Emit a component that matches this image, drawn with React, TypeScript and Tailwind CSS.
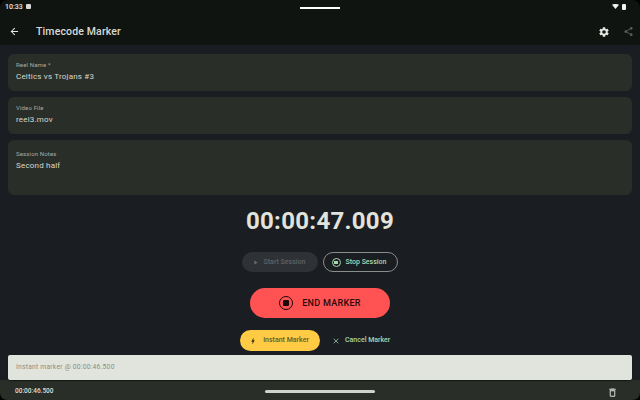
import { ArrowLeft, X } from 'lucide-react';

const font = "font-['Roboto',sans-serif]";

function Field({ label, value, height, top }: { label: string; value: string; height: string; top: string }) {
  return (
    <div className={`${height} ${top} rounded-[6px] bg-[#2a2e28] px-[8px]`}>
      <p className="text-[6px] leading-[8px] tracking-[0.15px] text-[#a8aca4]">{label}</p>
      <p className="mt-[2px] text-[8px] leading-[12px] tracking-[0.2px] text-[#d6d8d0]">{value}</p>
    </div>
  );
}

function Corner({ className, d }: { className: string; d: string }) {
  return (
    <svg viewBox="0 0 8 8" className={`absolute h-[8px] w-[8px] ${className}`}>
      <path d={d} fill="#000" />
    </svg>
  );
}

function MaterialIcon({ d, className }: { d: string; className: string }) {
  return (
    <svg viewBox="0 0 24 24" className={className} fill="currentColor">
      <path d={d} />
    </svg>
  );
}

const gear =
  'M19.14 12.94c.04-.3.06-.61.06-.94 0-.32-.02-.64-.07-.94l2.03-1.58a.49.49 0 0 0 .12-.61l-1.92-3.32a.49.49 0 0 0-.59-.22l-2.39.96c-.5-.38-1.03-.7-1.62-.94l-.36-2.54a.48.48 0 0 0-.48-.41h-3.84a.48.48 0 0 0-.47.41l-.36 2.54c-.59.24-1.13.57-1.62.94l-2.39-.96a.49.49 0 0 0-.59.22L2.74 8.87a.48.48 0 0 0 .12.61l2.03 1.58c-.05.3-.09.63-.09.94s.02.64.07.94l-2.03 1.58a.49.49 0 0 0-.12.61l1.92 3.32c.12.22.37.29.59.22l2.39-.96c.5.38 1.03.7 1.62.94l.36 2.54c.05.24.24.41.48.41h3.84c.24 0 .44-.17.47-.41l.36-2.54c.59-.24 1.13-.56 1.62-.94l2.39.96c.22.08.47 0 .59-.22l1.92-3.32a.48.48 0 0 0-.12-.61l-2.01-1.58zM12 15.6A3.6 3.6 0 1 1 12 8.4a3.6 3.6 0 0 1 0 7.2z';
const share =
  'M18 16.08c-.76 0-1.44.3-1.96.77L8.91 12.7c.05-.23.09-.46.09-.7s-.04-.47-.09-.7l7.05-4.11c.54.5 1.25.81 2.04.81 1.66 0 3-1.34 3-3s-1.34-3-3-3-3 1.34-3 3c0 .24.04.47.09.7L8.04 9.81C7.5 9.31 6.79 9 6 9c-1.66 0-3 1.34-3 3s1.34 3 3 3c.79 0 1.5-.31 2.04-.81l7.12 4.16c-.05.21-.08.43-.08.65 0 1.61 1.31 2.92 2.92 2.92s2.92-1.31 2.92-2.92-1.31-2.92-2.92-2.92z';
const trash = 'M6 19c0 1.1.9 2 2 2h8c1.1 0 2-.9 2-2V7H6v12zM8 9h8v10H8V9zm7.5-5l-1-1h-5l-1 1H5v2h14V4h-3.5z';
const bolt = 'M11 21h-1l1-7H7.5c-.58 0-.57-.32-.38-.66.19-.34.05-.08.07-.12C8.48 10.94 10.42 7.54 13 3h1l-1 7h3.5c.49 0 .56.33.47.51l-.07.15C12.96 17.55 11 21 11 21z';
const play = 'M8 5v14l11-7z';

export default function App() {
  return (
    <div className={`relative flex h-[400px] w-[640px] flex-col overflow-hidden bg-[#1a1e22] ${font}`}>
      {/* status + app bar */}
      <div className="h-[45px] shrink-0 bg-[#101411]">
        <div className="relative flex h-[12px] items-center justify-between pl-[5px] pr-[14px] pt-[1px]">
          <div className="flex items-center gap-[3px]">
            <span className="text-[7px] font-medium leading-[8px] text-[#e8e8e8]">10:33</span>
            <span className="h-[5px] w-[5px] rounded-[1px] bg-[#d8d8d8]" />
          </div>
          <div className="flex items-center gap-[3px]">
            <svg viewBox="0 0 7 5" className="h-[5px] w-[7px]">
              <path d="M0 0.8C2 -0.3 5 -0.3 7 0.8L3.5 5z" fill="#f2f2f2" />
            </svg>
            <span className="h-[6px] w-[4px] rounded-[1px] bg-[#f2f2f2]" />
          </div>
          <span className="absolute left-[300px] top-[7px] h-[2px] w-[40px] bg-white" />
        </div>
        <div className="flex h-[39px] items-center pl-[9px] pr-[6px]">
          <ArrowLeft className="h-[11px] w-[11px] text-[#e4e6e0]" strokeWidth={2.2} />
          <h1 className="ml-[16px] text-[10.5px] font-medium tracking-[0.15px] text-[#d8dad4]">Timecode Marker</h1>
          <MaterialIcon d={gear} className="ml-auto h-[12px] w-[12px] text-[#e4e6e0]" />
          <MaterialIcon d={share} className="ml-[13px] h-[11px] w-[11px] text-[#5a5e58]" />
        </div>
      </div>

      {/* form */}
      <div className="flex flex-col gap-[6px] px-[8px] pt-[9px]">
        <Field label="Reel Name *" value="Celtics vs Trojans #3" height="h-[37px]" top="pt-[7px]" />
        <Field label="Video File" value="reel3.mov" height="h-[37px]" top="pt-[7px]" />
        <Field label="Session Notes" value="Second half" height="h-[55px]" top="pt-[10px]" />
      </div>

      {/* timer */}
      <p className="mt-[11px] text-center text-[24px] font-bold leading-[30px] tracking-[0.3px] text-[#e2e4dc]">
        00:00:47.009
      </p>

      {/* session buttons */}
      <div className="mt-[16px] flex justify-center gap-[5px]">
        <button className="flex h-[20px] w-[76px] items-center justify-center gap-[5px] rounded-full bg-[#2e3236] pr-[3px] pt-[1px] text-[7px] font-medium text-[#5e6264]">
          <MaterialIcon d={play} className="h-[7px] w-[7px] text-[#6a6e70]" />
          Start Session
        </button>
        <button className="flex h-[20px] w-[75px] items-center justify-center gap-[5px] rounded-full border border-[#8a8e88] pr-[3px] pt-[1px] text-[7px] font-medium text-[#a8d8b0]">
          <span className="flex h-[9px] w-[9px] items-center justify-center rounded-full border border-[#a8d8b0]">
            <span className="h-[3px] w-[4px] bg-[#a8d8b0]" />
          </span>
          Stop Session
        </button>
      </div>

      {/* end marker */}
      <div className="mt-[16px] flex justify-center">
        <button className="flex h-[30px] w-[140px] items-center justify-center gap-[9px] rounded-full bg-[#ff5252] text-[9px] font-medium tracking-[0.3px] text-[#2a0a0a]">
          <span className="flex h-[14px] w-[14px] items-center justify-center rounded-full border-[1.5px] border-[#1c0808]">
            <span className="h-[6px] w-[6px] rounded-[1px] bg-[#1c0808]" />
          </span>
          <span className="pt-[1px]">END MARKER</span>
        </button>
      </div>

      {/* marker actions */}
      <div className="mt-[12px] flex items-center pl-[240px]">
        <button className="flex h-[21px] w-[80px] items-center justify-center gap-[6px] rounded-full bg-[#ffcb45] pr-[2px] text-[7px] font-medium text-[#6a5a28]">
          <MaterialIcon d={bolt} className="h-[8px] w-[8px] text-[#3a3010]" />
          Instant Marker
        </button>
        <X className="ml-[12px] h-[8px] w-[8px] text-[#a8d8b0]" strokeWidth={2.2} />
        <span className="ml-[5px] text-[7px] font-medium text-[#a8d8b0]">Cancel Marker</span>
      </div>

      {/* snackbar + bottom row */}
      <div className="mt-[4px] flex min-h-0 flex-1 flex-col">
        <div className="relative z-10 mx-[8px] flex h-[25px] shrink-0 items-center rounded-[2px] bg-[#e0e4dc] px-[8px] shadow-[0_1px_1px_rgba(0,0,0,0.5)]">
          <span className="text-[6.7px] tracking-[0.25px] text-[#8a8e88]">Instant marker @ 00:00:46.500</span>
        </div>
        <div className="relative flex flex-1 items-center justify-between bg-[#2a2e28] pl-[15px] pr-[22px] pt-[4px]">
          <span className="text-[6.5px] font-medium text-[#dcdeda]">00:00:46.500</span>
          <MaterialIcon d={trash} className="h-[11px] w-[11px] text-[#e0e2dc]" />
          <span className="absolute bottom-[7px] left-[265px] h-[3px] w-[110px] rounded-full bg-[#d0d2cc]" />
        </div>
      </div>

      {/* screen corners */}
      <Corner className="left-0 top-0" d="M0 0h8C3 0 0 3 0 8z" />
      <Corner className="right-0 top-0" d="M8 0H0c5 0 8 3 8 8z" />
      <Corner className="bottom-0 left-0" d="M0 8h8C3 8 0 5 0 0z" />
      <Corner className="bottom-0 right-0" d="M8 8H0c5 0 8-3 8-8z" />
    </div>
  );
}
